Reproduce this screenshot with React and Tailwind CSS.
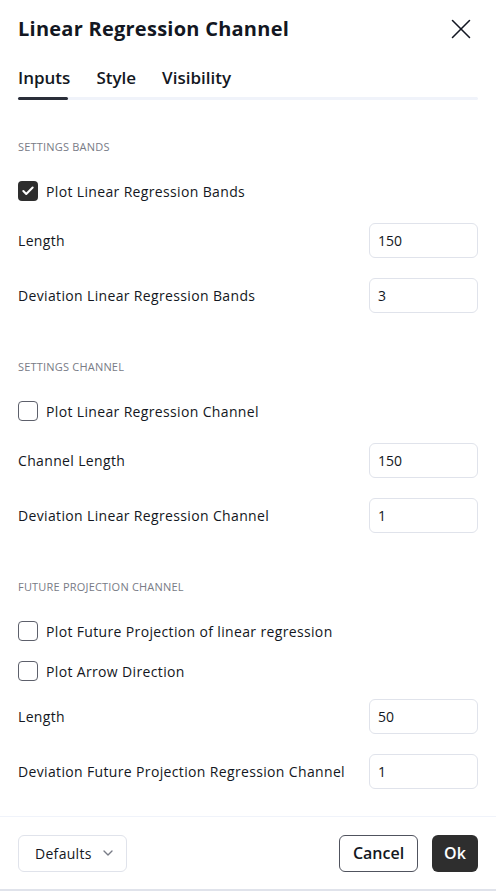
import { X, Check, ChevronDown } from "lucide-react";

const font = { fontFamily: '"Open Sans", "Liberation Sans", sans-serif' };

const SectionTitle = ({ children }) => (
  <div className="h-[44px] flex items-center text-[11px] uppercase text-[#787b86] tracking-[0.2px]">
    {children}
  </div>
);

const CheckRow = ({ label, checked, h = "h-[44px]" }) => (
  <div className={`${h} flex items-center gap-2`}>
    {checked ? (
      <span className="w-5 h-5 rounded-[4px] bg-[#2e2e2e] flex items-center justify-center">
        <Check className="w-3.5 h-3.5 text-white" strokeWidth={3.5} />
      </span>
    ) : (
      <span className="w-5 h-5 rounded-[4px] border border-[#5d606b] bg-white" />
    )}
    <span className="text-[14px] tracking-[0.35px] text-[#131722]">{label}</span>
  </div>
);

const InputRow = ({ label, value }) => (
  <div className="h-[55px] flex items-center justify-between">
    <span className="text-[14px] tracking-[0.35px] text-[#131722]">{label}</span>
    <div className="w-[109px] h-[35px] rounded-md border border-[#e0e3eb] flex items-center px-2 text-[14px] text-[#131722]">
      {value}
    </div>
  </div>
);

export default function App() {
  return (
    <div className="w-[496px] h-[891px] bg-white flex flex-col" style={font}>
      {/* Header */}
      <div className="h-[58px] flex items-center justify-between pl-[18px] pr-[18px]">
        <h1 className="text-[20px] font-bold tracking-[0.25px] text-[#131722]">Linear Regression Channel</h1>
        <X className="w-[34px] h-[34px] text-[#131722]" strokeWidth={1.1} />
      </div>

      {/* Tabs */}
      <div className="mx-[18px] h-[43px] flex flex-col">
        <div className="flex-1 flex items-center gap-[26px] text-[17px] font-semibold text-[#131722]">
          <span>Inputs</span>
          <span>Style</span>
          <span>Visibility</span>
        </div>
        <div className="h-[3px] bg-[#f0f3fa] rounded-full mb-[1px]">
          <div className="w-[50px] h-[3px] bg-[#2a2e39] rounded-full" />
        </div>
      </div>

      {/* Content */}
      <div className="flex-1 px-[18px] pt-[24px]">
        <SectionTitle>Settings Bands</SectionTitle>
        <CheckRow label="Plot Linear Regression Bands" checked />
        <InputRow label="Length" value="150" />
        <InputRow label="Deviation Linear Regression Bands" value="3" />

        <div className="h-[22px]" />
        <SectionTitle>Settings Channel</SectionTitle>
        <CheckRow label="Plot Linear Regression Channel" />
        <InputRow label="Channel Length" value="150" />
        <InputRow label="Deviation Linear Regression Channel" value="1" />

        <div className="h-[22px]" />
        <SectionTitle>Future Projection Channel</SectionTitle>
        <CheckRow label="Plot Future Projection of linear regression" />
        <CheckRow label="Plot Arrow Direction" h="h-[36px]" />
        <InputRow label="Length" value="50" />
        <InputRow label="Deviation Future Projection Regression Channel" value="1" />
      </div>

      {/* Footer */}
      <div className="h-[75px] border-t border-[#f0f3fa] border-b-2 border-b-[#e0e3eb] px-[18px] flex items-center justify-between">
        <div className="w-[109px] h-[37px] rounded-md border border-[#e0e3eb] flex items-center justify-between pl-4 pr-2.5 text-[14px] tracking-[0.3px] text-[#131722]">
          <span>Defaults</span>
          <ChevronDown className="w-4 h-4 text-[#787b86]" />
        </div>
        <div className="flex items-center gap-[14px]">
          <button className="w-[79px] h-[37px] rounded-md border border-[#50535e] text-[16px] font-semibold text-[#131722]">
            Cancel
          </button>
          <button className="w-[46px] h-[37px] rounded-md bg-[#2e2e2e] text-[16px] font-semibold text-white">
            Ok
          </button>
        </div>
      </div>
    </div>
  );
}
